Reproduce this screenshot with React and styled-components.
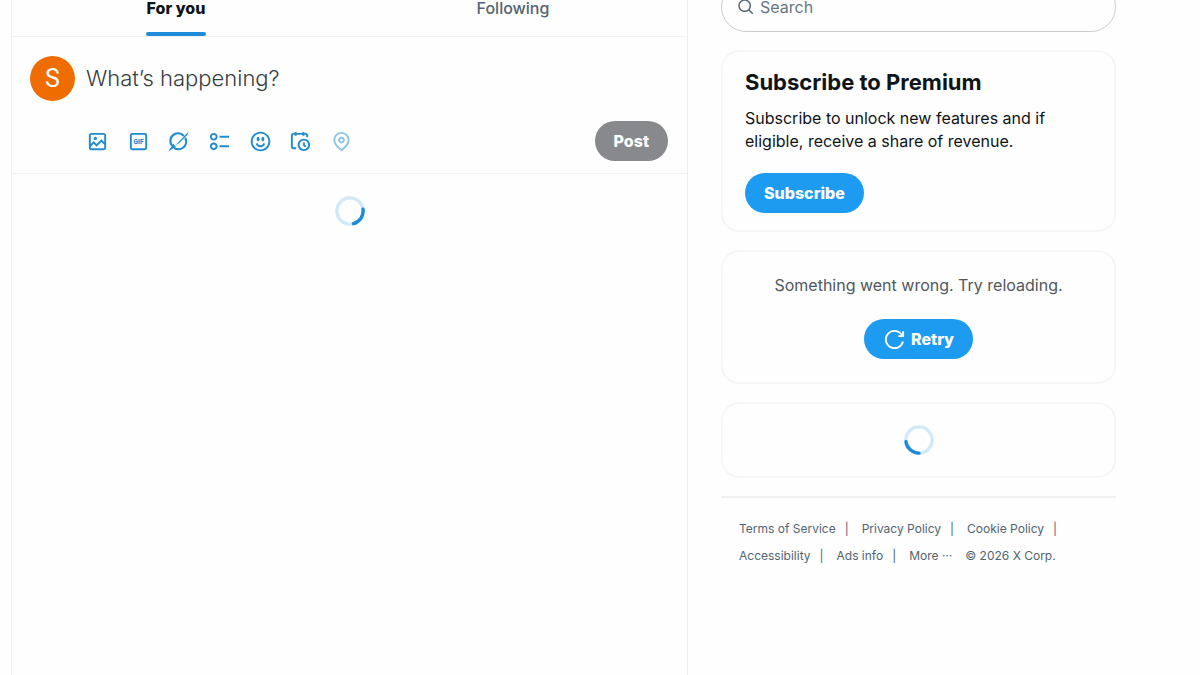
import React from 'react'
import styled, { createGlobalStyle, css } from 'styled-components'

const GlobalStyle = createGlobalStyle`
  * {
    box-sizing: border-box;
  }

  body {
    margin: 0;
    overflow: hidden;
    background: #fefefe;
    color: #0f1419;
    font-family: Inter, Roboto, 'Liberation Sans', sans-serif;
    font-size: 16px;
    line-height: 23px;
  }

  button,
  input {
    font: inherit;
  }
`

const Page = styled.div`
  display: grid;
  grid-template-columns: 677fr 395fr;
  gap: 33px;
  min-height: calc(100vh + 23px);
  margin-top: -23px;
  padding: 0 84px 0 11px;
`

const Timeline = styled.main`
  border: 1px solid #eaeef0;
  border-width: 0 1px;
`

const Tabs = styled.nav`
  display: flex;
  gap: 9px;
  height: 60px;
  padding-right: 10px;
  border-bottom: 1px solid #eff1f2;
`

const Tab = styled.button`
  flex: 1;
  display: flex;
  justify-content: center;
  padding: 0;
  border: 0;
  background: none;
  color: ${props => (props.$active ? '#0f1419' : '#536471')};
  font-weight: ${props => (props.$active ? 800 : 500)};
  line-height: 14px;
`

const TabLabel = styled.span`
  position: relative;
  display: flex;
  align-items: center;
  height: 100%;
  padding: 2px 1px 0;

  ${props =>
    props.$active &&
    css`
      &::after {
        content: '';
        position: absolute;
        right: 0;
        bottom: 0;
        left: 0;
        height: 4px;
        border-radius: 2px;
        background: #1d8cd8;
      }
    `}
`

const Composer = styled.form`
  display: flex;
  gap: 11px;
  padding: 19px 19px 12px 18px;
  border-bottom: 1px solid #eff1f2;
`

const Avatar = styled.div`
  display: flex;
  flex: none;
  align-items: center;
  justify-content: center;
  width: 45px;
  height: 45px;
  border-radius: 50%;
  background: #ef6c00;
  color: #fff;
  font-family: Roboto, sans-serif;
  font-size: 25px;
`

const ComposerBody = styled.div`
  flex: 1;
  min-width: 0;
`

const ComposerInput = styled.input`
  display: block;
  width: 100%;
  height: 43px;
  padding: 0;
  border: 0;
  outline: 0;
  background: none;
  font-size: 22px;
  font-weight: 300;

  &::placeholder {
    color: #363d43;
    opacity: 1;
  }
`

const Toolbar = styled.div`
  display: flex;
  align-items: center;
  justify-content: space-between;
  margin-top: 22px;
`

const Tools = styled.div`
  display: flex;
  width: 285px;
  margin-left: -9px;
`

const Tool = styled.button`
  flex: 1;
  display: flex;
  align-items: center;
  justify-content: center;
  height: 40px;
  padding: 0;
  border: 0;
  background: none;
  color: #1d8cd0;

  &:disabled {
    opacity: 0.5;
  }
`

const Icon = styled.svg`
  display: block;
  width: ${props => props.$size}px;
  height: ${props => props.$size}px;
  fill: currentColor;
`

const Pill = styled.button`
  display: inline-flex;
  align-items: center;
  justify-content: center;
  gap: 5px;
  height: 40px;
  padding: 0 19px;
  border: 0;
  border-radius: 20px;
  background: ${props => (props.disabled ? '#87898c' : '#1d9bf0')};
  color: #fff;
  font-weight: 800;
`

const Loading = styled.div`
  display: flex;
  justify-content: center;
  padding: ${props => props.$padding};
`

const Sidebar = styled.aside`
  display: flex;
  flex-direction: column;
  gap: 18px;
  padding-top: 5px;
`

const SearchBox = styled.label`
  display: flex;
  align-items: center;
  gap: 5px;
  height: 50px;
  padding: 0 15px;
  border: 1px solid #c9cdd0;
  border-radius: 25px;
  color: #536471;
`

const SearchInput = styled.input`
  flex: 1;
  min-width: 0;
  padding: 0;
  border: 0;
  outline: 0;
  background: none;

  &::placeholder {
    color: #687684;
    opacity: 1;
  }
`

const Card = styled.section`
  display: flex;
  flex-direction: column;
  align-items: ${props => (props.$center ? 'center' : 'flex-start')};
  padding: ${props => props.$padding || '17px 22px'};
  border: 2px solid #f5f6f7;
  border-radius: 18px;
`

const CardTitle = styled.h2`
  margin: 0 0 11px;
  font-size: 22px;
  font-weight: 700;
  line-height: 27px;
`

const CardText = styled.p`
  margin: 0 0 ${props => (props.$muted ? 22 : 20)}px;
  color: ${props => (props.$muted ? '#50575d' : '#0f1419')};
`

const Footer = styled.footer`
  display: flex;
  flex-wrap: wrap;
  padding: 17px 18px;
  border-top: 2px solid #eef0f1;
  color: #536471;
  font-size: 12px;
  line-height: 27px;
`

const FooterItem = styled.span`
  display: flex;
  margin-right: 13px;
`

const FooterLink = styled.a`
  color: inherit;
  text-decoration: none;
`

const Divider = styled.span`
  margin-left: 9px;
`

const MEDIA =
  'M3 5.5C3 4.119 4.119 3 5.5 3h13C19.881 3 21 4.119 21 5.5v13c0 1.381-1.119 2.5-2.5 2.5h-13C4.119 21 3 19.881 3 18.5v-13zM5.5 5c-.276 0-.5.224-.5.5v9.086l3-3 3 3 5-5 3 3V5.5c0-.276-.224-.5-.5-.5h-13zM19 15.414l-3-3-5 5-3-3-3 3V18.5c0 .276.224.5.5.5h13c.276 0 .5-.224.5-.5v-3.086zM9.75 7C8.784 7 8 7.784 8 8.75s.784 1.75 1.75 1.75 1.75-.784 1.75-1.75S10.716 7 9.75 7z'
const POLL =
  'M6 5c-1.1 0-2 .895-2 2s.9 2 2 2 2-.895 2-2-.9-2-2-2zM2 7c0-2.209 1.79-4 4-4s4 1.791 4 4-1.79 4-4 4-4-1.791-4-4zm20 1H12V6h10v2zM6 15c-1.1 0-2 .895-2 2s.9 2 2 2 2-.895 2-2-.9-2-2-2zm-4 2c0-2.209 1.79-4 4-4s4 1.791 4 4-1.79 4-4 4-4-1.791-4-4zm20 1H12v-2h10v2z'
const EMOJI =
  'M8 9.5C8 8.119 8.672 7 9.5 7S11 8.119 11 9.5 10.328 12 9.5 12 8 10.881 8 9.5zm6.5 2.5c.828 0 1.5-1.119 1.5-2.5S15.328 7 14.5 7 13 8.119 13 9.5s.672 2.5 1.5 2.5zM12 16c-2.224 0-3.021-2.227-3.051-2.316l-1.897.633c.05.15 1.271 3.684 4.949 3.684s4.898-3.533 4.949-3.684l-1.896-.638c-.033.095-.83 2.322-3.053 2.322zm10.25-4.001c0 5.652-4.598 10.25-10.25 10.25S1.75 17.652 1.75 12 6.348 1.75 12 1.75 22.25 6.348 22.25 12zm-2 0c0-4.549-3.701-8.25-8.25-8.25S3.75 7.451 3.75 12s3.701 8.25 8.25 8.25 8.25-3.701 8.25-8.25z'
const SCHEDULE =
  'M6 3V2h2v1h6V2h2v1h1.5C18.88 3 20 4.119 20 5.5v2h-2v-2c0-.276-.22-.5-.5-.5H16v1h-2V5H8v1H6V5H4.5c-.28 0-.5.224-.5.5v12c0 .276.22.5.5.5h3v2h-3C3.12 20 2 18.881 2 17.5v-12C2 4.119 3.12 3 4.5 3H6zm9.5 8c-2.49 0-4.5 2.015-4.5 4.5s2.01 4.5 4.5 4.5 4.5-2.015 4.5-4.5-2.01-4.5-4.5-4.5zM9 15.5C9 11.91 11.91 9 15.5 9s6.5 2.91 6.5 6.5-2.91 6.5-6.5 6.5S9 19.09 9 15.5zm5.5-2.5h2v2.086l1.71 1.707-1.42 1.414-2.29-2.293V13z'
const LOCATION =
  'M12 7c-1.93 0-3.5 1.57-3.5 3.5S10.07 14 12 14s3.5-1.57 3.5-3.5S13.93 7 12 7zm0 5c-.827 0-1.5-.673-1.5-1.5S11.173 9 12 9s1.5.673 1.5 1.5S12.827 12 12 12zm0-10c-4.687 0-8.5 3.813-8.5 8.5 0 5.967 7.621 11.116 7.945 11.332l.555.37.555-.37c.324-.216 7.945-5.365 7.945-11.332C20.5 5.813 16.687 2 12 2zm0 17.77c-1.665-1.241-6.5-5.196-6.5-9.27C5.5 6.916 8.416 4 12 4s6.5 2.916 6.5 6.5c0 4.073-4.835 8.028-6.5 9.27z'
const SEARCH =
  'M10.25 3.75c-3.59 0-6.5 2.91-6.5 6.5s2.91 6.5 6.5 6.5c1.795 0 3.419-.726 4.596-1.904 1.178-1.177 1.904-2.801 1.904-4.596 0-3.59-2.91-6.5-6.5-6.5zm-8.5 6.5c0-4.694 3.806-8.5 8.5-8.5s8.5 3.806 8.5 8.5c0 1.986-.682 3.815-1.824 5.262l4.781 4.781-1.414 1.414-4.781-4.781c-1.447 1.142-3.276 1.824-5.262 1.824-4.694 0-8.5-3.806-8.5-8.5z'
const RETRY =
  'M12 4c-4.418 0-8 3.58-8 8s3.582 8 8 8c3.806 0 6.993-2.66 7.802-6.22l1.95.44C20.742 18.67 16.76 22 12 22 6.477 22 2 17.52 2 12S6.477 2 12 2c3.272 0 6.176 1.57 8 4V3.5h2v6h-6v-2h2.616C17.175 5.39 14.749 4 12 4z'

const Glyph = ({ d, size = 23, children }) => (
  <Icon viewBox="0 0 24 24" $size={size} aria-hidden="true">
    {d ? <path d={d} /> : children}
  </Icon>
)

const GifIcon = () => (
  <Glyph>
    <rect
      x="4"
      y="4"
      width="16"
      height="16"
      rx="1.5"
      fill="none"
      stroke="currentColor"
      strokeWidth="2"
    />
    <text
      x="12"
      y="14.6"
      textAnchor="middle"
      fontSize="7"
      fontWeight="900"
      fontFamily="Roboto, sans-serif"
    >
      GIF
    </text>
  </Glyph>
)

const GrokIcon = () => (
  <Glyph>
    <g fill="none" stroke="currentColor" strokeWidth="2.3">
      <path d="M17.6 6.2A8 8 0 0 0 5.4 16.6" />
      <path d="M19 8.2A8 8 0 0 1 7.4 18.6" />
    </g>
    <path d="M22.6 1.6 9 15.8l4.2-2.4 8-8.2zM6.8 14.4 1.2 22.4l8-4.8z" />
  </Glyph>
)

const tools = [
  { label: 'Add photos or video', icon: <Glyph d={MEDIA} /> },
  { label: 'Add a GIF', icon: <GifIcon /> },
  { label: 'Enhance your post with Grok', icon: <GrokIcon /> },
  { label: 'Add poll', icon: <Glyph d={POLL} /> },
  { label: 'Add emoji', icon: <Glyph d={EMOJI} /> },
  { label: 'Schedule post', icon: <Glyph d={SCHEDULE} /> },
  { label: 'Tag location', icon: <Glyph d={LOCATION} />, disabled: true },
]

const footerLinks = [
  'Terms of Service',
  'Privacy Policy',
  'Cookie Policy',
  'Accessibility',
  'Ads info',
]

const Spinner = ({ angle }) => (
  <Icon viewBox="0 0 32 32" $size={30} role="img" aria-label="Loading">
    <g fill="none" strokeWidth="3.6">
      <circle cx="16" cy="16" r="14" stroke="#d2e9f8" />
      <circle
        cx="16"
        cy="16"
        r="14"
        stroke="#1d8cd8"
        strokeLinecap="round"
        strokeDasharray="20 68"
        transform={`rotate(${angle} 16 16)`}
      />
    </g>
  </Icon>
)

const App = () => (
  <>
    <GlobalStyle />
    <Page>
      <Timeline>
        <Tabs>
          <Tab type="button" $active>
            <TabLabel $active>For you</TabLabel>
          </Tab>
          <Tab type="button">
            <TabLabel>Following</TabLabel>
          </Tab>
        </Tabs>

        <Composer>
          <Avatar>S</Avatar>
          <ComposerBody>
            <ComposerInput
              type="text"
              aria-label="Post text"
              placeholder="What’s happening?"
            />
            <Toolbar>
              <Tools>
                {tools.map(tool => (
                  <Tool
                    key={tool.label}
                    type="button"
                    aria-label={tool.label}
                    disabled={tool.disabled}
                  >
                    {tool.icon}
                  </Tool>
                ))}
              </Tools>
              <Pill type="submit" disabled>
                Post
              </Pill>
            </Toolbar>
          </ComposerBody>
        </Composer>

        <Loading $padding="22px 0">
          <Spinner angle={-8} />
        </Loading>
      </Timeline>

      <Sidebar>
        <SearchBox>
          <Glyph d={SEARCH} size={18} />
          <SearchInput type="text" aria-label="Search" placeholder="Search" />
        </SearchBox>

        <Card>
          <CardTitle>Subscribe to Premium</CardTitle>
          <CardText>
            Subscribe to unlock new features and if eligible, receive a share of
            revenue.
          </CardText>
          <Pill type="button">Subscribe</Pill>
        </Card>

        <Card $center $padding="22px 22px 23px">
          <CardText $muted>Something went wrong. Try reloading.</CardText>
          <Pill type="button">
            <Glyph d={RETRY} />
            Retry
          </Pill>
        </Card>

        <Card $center $padding="21px">
          <Spinner angle={90} />
        </Card>

        <Footer>
          {footerLinks.map(link => (
            <FooterItem key={link}>
              <FooterLink href="#">{link}</FooterLink>
              <Divider>|</Divider>
            </FooterItem>
          ))}
          <FooterItem>
            <FooterLink href="#">More ···</FooterLink>
          </FooterItem>
          <span>© 2026 X Corp.</span>
        </Footer>
      </Sidebar>
    </Page>
  </>
)

export default App
